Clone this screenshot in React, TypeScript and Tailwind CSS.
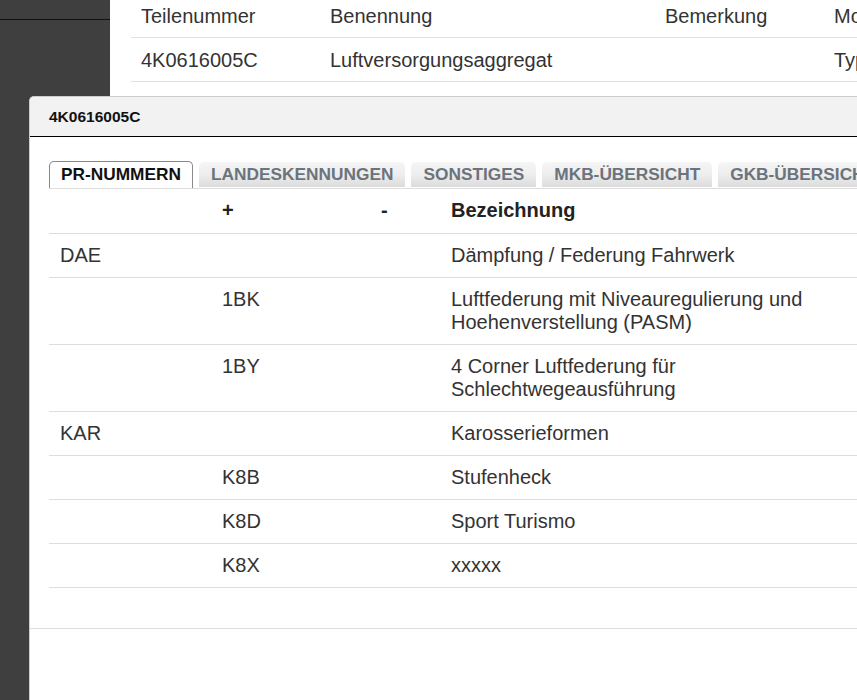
const topHead = ["Teilenummer", "Benennung", "Bemerkung", "Modell"];
const topRow = ["4K0616005C", "Luftversorgungsaggregat", "", "Typ"];

const tabs = ["PR-NUMMERN", "LANDESKENNUNGEN", "SONSTIGES", "MKB-ÜBERSICHT", "GKB-ÜBERSICHT"];

type PrRow = { family: string; plus: string; minus: string; text: string[] };

const rows: PrRow[] = [
  { family: "DAE", plus: "", minus: "", text: ["Dämpfung / Federung Fahrwerk"] },
  { family: "", plus: "1BK", minus: "", text: ["Luftfederung mit Niveauregulierung und", "Hoehenverstellung (PASM)"] },
  { family: "", plus: "1BY", minus: "", text: ["4 Corner Luftfederung für", "Schlechtwegeausführung"] },
  { family: "KAR", plus: "", minus: "", text: ["Karosserieformen"] },
  { family: "", plus: "K8B", minus: "", text: ["Stufenheck"] },
  { family: "", plus: "K8D", minus: "", text: ["Sport Turismo"] },
  { family: "", plus: "K8X", minus: "", text: ["xxxxx"] },
];

const prCols = "grid grid-cols-[162px_159px_70px_1fr]";
const cell = "pl-[11px] py-[10px] leading-[23px] whitespace-nowrap";
const headCell = "pl-[11px] pt-[10px] pb-[11px] leading-[23px] whitespace-nowrap";

function Tabs() {
  return (
    <div className="flex items-end gap-[6px] border-b border-[#dddddd] text-[17.3px] font-bold leading-none">
      {tabs.map((t, i) =>
        i === 0 ? (
          <div
            key={t}
            className="flex h-[27px] items-center rounded-t-[5px] border border-b-0 border-[#8a8a8a] bg-white px-[11px] text-[#111]"
          >
            {t}
          </div>
        ) : (
          <div
            key={t}
            className="mb-[1px] flex h-[25px] shrink-0 items-center rounded-t-[5px] bg-gradient-to-b from-[#f6f6f6] via-[#ededed] to-[#dcdcdc] px-[12px] text-[#6b737c] whitespace-nowrap"
          >
            {t}
          </div>
        )
      )}
    </div>
  );
}

function PrTable() {
  return (
    <div className="text-[20px] text-[#333]">
      <div className={`${prCols} border-b border-[#dddddd] font-bold text-[#222]`}>
        <div className={headCell}></div>
        <div className={headCell}>+</div>
        <div className={headCell}>-</div>
        <div className={headCell}>Bezeichnung</div>
      </div>
      {rows.map((r, i) => (
        <div key={i} className={`${prCols} border-b border-[#dddddd]`}>
          <div className={cell}>{r.family}</div>
          <div className={cell}>{r.plus}</div>
          <div className={cell}>{r.minus}</div>
          <div className={cell}>
            {r.text.map((line) => (
              <div key={line}>{line}</div>
            ))}
          </div>
        </div>
      ))}
    </div>
  );
}

export default function App() {
  return (
    <div className="relative h-[700px] w-[857px] overflow-hidden bg-white font-['Liberation_Sans',Arial,sans-serif]">
      <div className="flex h-full">
        <aside className="w-[110px] shrink-0 bg-[#3f3f3f]">
          <div className="h-[20px] border-b border-[#111]" />
        </aside>
        <main className="min-w-0 flex-1 overflow-hidden pl-[21px]">
          <div className="w-[900px] text-[20px] text-[#333]">
            <div className="grid h-[38px] grid-cols-[189px_335px_169px_200px] border-b border-[#dee2e6] pt-[4px] leading-[24px]">
              {topHead.map((h) => (
                <div key={h} className="pl-[10px]">{h}</div>
              ))}
            </div>
            <div className="grid h-[44px] grid-cols-[189px_335px_169px_200px] border-b border-[#dee2e6] pt-[10px] leading-[24px]">
              {topRow.map((c, i) => (
                <div key={i} className="pl-[10px] whitespace-nowrap">{c}</div>
              ))}
            </div>
          </div>
        </main>
      </div>

      <div className="absolute left-[29px] top-[96px] bottom-0 w-[900px] rounded-tl-[5px] border-l border-t border-[#cccccc] bg-white">
        <div className="flex h-[40px] items-center rounded-tl-[5px] border-b border-black bg-[#f2f2f2] pl-[19px] text-[15.5px] font-bold text-[#111]">
          4K0616005C
        </div>
        <div className="px-[19px] pt-[24px]">
          <Tabs />
          <PrTable />
        </div>
        <div className="mt-[40px] border-t border-[#dddddd]" />
      </div>
    </div>
  );
}
